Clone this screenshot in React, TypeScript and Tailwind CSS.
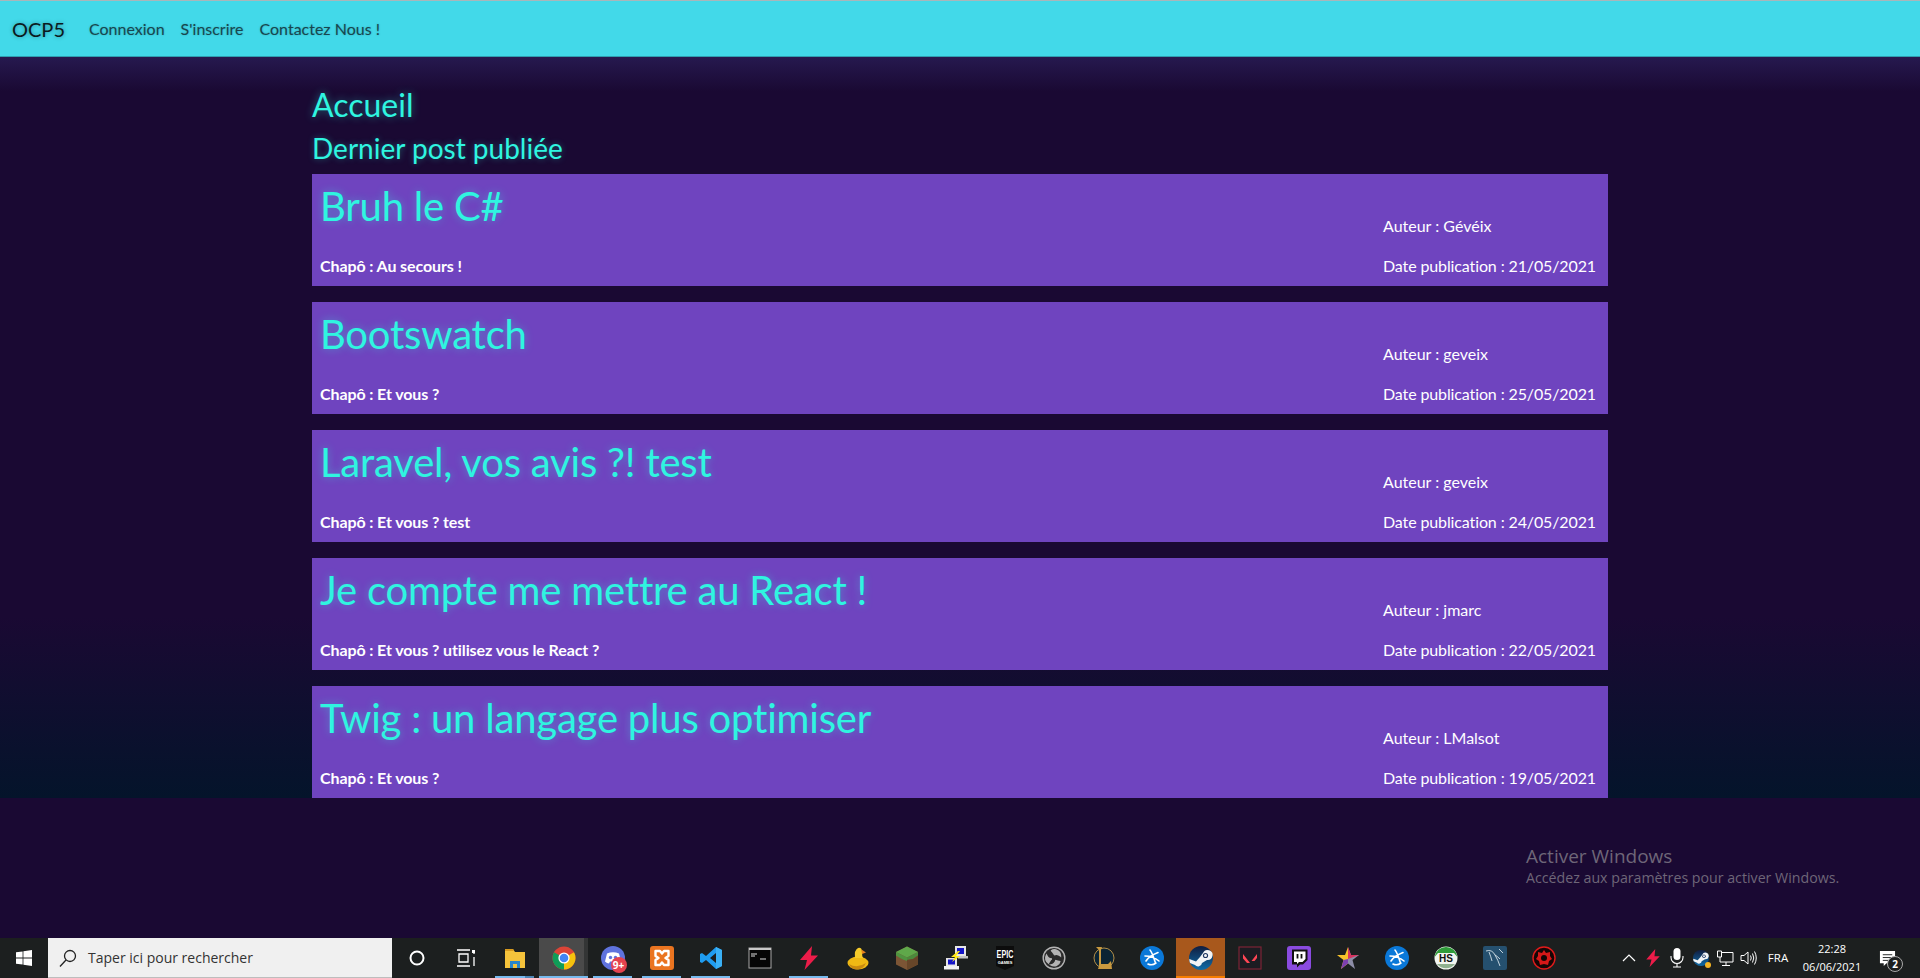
import { type ReactNode } from "react";

const POSTS = [
  { title: "Bruh le C#", chapo: "Au secours !", author: "Gévéix", date: "21/05/2021" },
  { title: "Bootswatch", chapo: "Et vous ?", author: "geveix", date: "25/05/2021" },
  { title: "Laravel, vos avis ?! test", chapo: "Et vous ? test", author: "geveix", date: "24/05/2021" },
  { title: "Je compte me mettre au React !", chapo: "Et vous ? utilisez vous le React ?", author: "jmarc", date: "22/05/2021" },
  { title: "Twig : un langage plus optimiser", chapo: "Et vous ?", author: "LMalsot", date: "19/05/2021" },
];

type SlotProps = { children: ReactNode; open?: boolean; active?: boolean; steam?: boolean; stacked?: boolean };

function Slot({ children, open, active, steam, stacked }: SlotProps) {
  return (
    <div className={`relative flex h-10 w-[49px] items-center justify-center ${active ? "bg-[#4a4a4a]" : ""} ${steam ? "bg-[#a8581c]" : ""}`}>
      {children}
      {active && <div className="absolute top-0 right-0 h-full w-1 bg-[#333535]" />}
      {open && <div className={`absolute bottom-0 h-0.5 bg-[#76b9ed] ${active ? "inset-x-0" : "inset-x-[5px]"}`} />}
      {stacked && <div className="absolute right-[5px] bottom-0 h-0.5 w-[9px] bg-[#4d86b5]" />}
      {steam && <div className="absolute inset-x-0 bottom-0 h-0.5 bg-[#f57c00]" />}
    </div>
  );
}

function Svg({ children, size = 24 }: { children: ReactNode; size?: number }) {
  return (
    <svg width={size} height={size} viewBox="0 0 24 24">
      {children}
    </svg>
  );
}

const Bolt = ({ size = 24 }: { size?: number }) => (
  <Svg size={size}>
    <path d="M15 0 L3 14 L10 14 L7.5 24 L21 9.5 L14 9.5 Z" fill="#ec1c49" />
  </Svg>
);

const BattleNet = () => (
  <Svg>
    <circle cx="12" cy="12" r="12" fill="#0a78d8" />
    <path d="M10 4 Q12 6 15.5 17 M6 15 Q9 10 18 6.5 M5 10 Q13 10 19 15 M8 18 Q12 20 16 17" stroke="#fff" strokeWidth="1.6" fill="none" strokeLinecap="round" />
  </Svg>
);

const SteamMark = ({ size = 24 }: { size?: number }) => (
  <Svg size={size}>
    <defs>
      <linearGradient id="steamFill" x1="0" y1="0" x2="0" y2="1">
        <stop offset="0" stopColor="#111d3f" />
        <stop offset="1" stopColor="#0f6ca8" />
      </linearGradient>
    </defs>
    <circle cx="12" cy="12" r="12" fill="url(#steamFill)" />
    <path d="M0.3 13 L7 15.5 L11 11 L14 7 A5 5 0 1 1 18 14 L13 17 A4 4 0 0 1 6 19 L1 17 Q0.3 15 0.3 13 Z" fill="#f2f4f6" />
    <circle cx="16.5" cy="9.5" r="2.6" fill="#1c3560" />
    <circle cx="16.5" cy="9.5" r="1.5" fill="#f2f4f6" />
  </Svg>
);

const TASK_ICONS: (Omit<SlotProps, "children"> & { icon: ReactNode })[] = [
  {
    icon: (
      <Svg>
        <circle cx="12" cy="12" r="6.5" stroke="#fff" strokeWidth="2" fill="none" />
      </Svg>
    ),
  },
  {
    icon: (
      <Svg>
        <path d="M3 4 H16 M3 20 H16 M5 8 H14 V16 H5 Z M20 6 V8 M20 11 V20" stroke="#fff" strokeWidth="1.3" fill="none" />
        <rect x="18" y="4" width="3" height="3" fill="#fff" />
      </Svg>
    ),
  },
  {
    open: true,
    stacked: true,
    icon: (
      <Svg>
        <path d="M2 3 H10 L12 6 H22 V22 H2 Z" fill="#f5c33b" />
        <path d="M2 3 H10 L11 5 H2 Z" fill="#d89a1e" />
        <path d="M7 22 V15 H17 V22 H14 V18 H10 V22 Z" fill="#2a86c9" />
      </Svg>
    ),
  },
  {
    open: true,
    active: true,
    icon: (
      <Svg>
        <circle cx="12" cy="12" r="11.5" fill="#db4437" />
        <path d="M12 12 L2 6.3 A11.5 11.5 0 0 0 12 23.5 Z" fill="#0f9d58" />
        <path d="M12 12 L22 6.3 A11.5 11.5 0 0 1 12 23.5 Z" fill="#f4c20d" />
        <circle cx="12" cy="12" r="5.6" fill="#fff" />
        <circle cx="12" cy="12" r="4.3" fill="#4285f4" />
      </Svg>
    ),
  },
  {
    open: true,
    icon: (
      <div className="relative">
        <Svg>
          <circle cx="12" cy="12" r="12" fill="#5f73de" />
          <path d="M6 7.5 Q12 5 18 7.5 L20 15.5 Q18 17.5 16 17.5 L15 15.5 H9 L8 17.5 Q6 17.5 4 15.5 Z" fill="#fff" />
          <circle cx="9.5" cy="11.5" r="1.7" fill="#5f73de" />
          <circle cx="14.5" cy="11.5" r="1.7" fill="#5f73de" />
        </Svg>
        <div className="absolute -right-0.5 -bottom-[3px] flex h-4 w-4 items-center justify-center rounded-full bg-[#e5434f] font-['Open_Sans',sans-serif] text-[10px] leading-none font-bold text-white">9+</div>
      </div>
    ),
  },
  {
    open: true,
    icon: (
      <Svg>
        <rect x="0" y="0" width="24" height="24" rx="3" fill="#ea7420" />
        <path d="M5.5 5 H10 L12 7.5 L14 5 H18.5 V10 L15.5 12 L18.5 14 V19 H14 L12 16.5 L10 19 H5.5 V14 L8.5 12 L5.5 10 Z" stroke="#fff" strokeWidth="2.4" fill="none" strokeLinejoin="round" />
      </Svg>
    ),
  },
  {
    open: true,
    icon: (
      <Svg>
        <path d="M17 1 L23 4 V20 L17 23 L7 14 L3 17 L1 16 V8 L3 7 L7 10 Z M17 7 L11 12 L17 17 Z" fill="#1f9cf0" fillRule="evenodd" />
        <path d="M17 1 L23 4 V20 L17 23 V17 V7 Z" fill="#3ab0f5" />
      </Svg>
    ),
  },
  {
    icon: (
      <Svg>
        <rect x="1" y="2" width="22" height="20" fill="#050505" stroke="#a8a8a8" strokeWidth="1" />
        <rect x="1" y="2" width="22" height="2" fill="#c8c8c8" />
        <path d="M3 8 H9 M3 10 H7 M12 13 H18" stroke="#ddd" strokeWidth="1.2" />
      </Svg>
    ),
  },
  { open: true, icon: <Bolt /> },
  {
    icon: (
      <Svg>
        <ellipse cx="12" cy="17" rx="10.5" ry="6.5" fill="#efb914" />
        <path d="M9 12 Q8 4 12 2 Q16 1 16 6 Q16 10 17 12 Z" fill="#f6cb2a" />
        <path d="M15.5 3.5 L20 6.5 L16 8 Z" fill="#e8821e" />
        <path d="M3 18 Q11 23 20 17 Q17 24 10 23.5 Q5 23 3 18 Z" fill="#c98a10" />
      </Svg>
    ),
  },
  {
    icon: (
      <Svg>
        <path d="M12 0.5 L23 6 V18.5 L12 24 L1 18.5 V6 Z" fill="#7c5535" />
        <path d="M12 0.5 L23 6 L12 11.5 L1 6 Z" fill="#5fa84a" />
        <path d="M1 6 L12 11.5 V15 L8 13.5 L5 12 L1 9.5 Z" fill="#4f9440" />
        <path d="M12 11.5 L23 6 V9.5 L18 13 L12 14 Z" fill="#4b8a3c" />
        <path d="M12 14 L18 13 L23 9.5 V18.5 L12 24 Z" fill="#674629" />
      </Svg>
    ),
  },
  {
    icon: (
      <Svg>
        <rect x="11" y="0" width="11" height="10" fill="#e6e6e6" />
        <rect x="13" y="2" width="7" height="6" fill="#1414c8" />
        <rect x="14" y="10" width="10" height="2.5" fill="#c4c4c4" />
        <rect x="2" y="12" width="11" height="8" fill="#e6e6e6" />
        <rect x="4" y="13.5" width="7" height="5" fill="#1414c8" />
        <rect x="0" y="20" width="15" height="3.5" fill="#f2f2f2" />
        <path d="M14 5 L7 11 H11 L8 16 L16 10 H12 L16 5 Z" fill="#ffe81a" />
      </Svg>
    ),
  },
  {
    icon: (
      <Svg>
        <path d="M3 0 H21 V20 L12 24 L3 20 Z" fill="#0c0c0c" />
        <text transform="translate(12 12) scale(0.72 1)" textAnchor="middle" fill="#fff" fontSize="10" fontWeight="700" fontFamily="'Liberation Sans',sans-serif">
          EPIC
        </text>
        <text x="12" y="18" textAnchor="middle" fill="#fff" fontSize="4" fontWeight="700" fontFamily="'Liberation Sans',sans-serif">
          GAMES
        </text>
      </Svg>
    ),
  },
  {
    icon: (
      <Svg>
        <circle cx="12" cy="12" r="10.8" fill="#2a2a2a" stroke="#b4b4b4" strokeWidth="1.4" />
        <path d="M9 5 A6 6 0 0 1 18.5 10 Q15 7 12 9 M7 17.5 A6 6 0 0 1 4.5 9 Q6 13 10 13 M18 15 A6 6 0 0 1 9 19 Q13 18.5 14 14" stroke="#b4b4b4" strokeWidth="1.4" fill="#b4b4b4" />
      </Svg>
    ),
  },
  {
    icon: (
      <Svg>
        <circle cx="13" cy="12" r="10" fill="#0b2433" stroke="#c49a4c" strokeWidth="0.9" />
        <path d="M5 1 H11 L10 4 V18 H17 L20 15 L21 23 H7 L8 20 V4 Z" fill="#c8993f" />
      </Svg>
    ),
  },
  { icon: <BattleNet /> },
  { steam: true, icon: <SteamMark /> },
  {
    icon: (
      <Svg>
        <rect x="1" y="1" width="22" height="22" fill="#1c1c22" stroke="#7c2436" strokeWidth="1.2" />
        <path d="M5 8 L12 17 H9 L5 12.5 Z M19 8 V12 L16.5 15 H13.5 Z" fill="#ff4655" />
      </Svg>
    ),
  },
  {
    icon: (
      <Svg>
        <rect x="0" y="0" width="24" height="24" rx="3" fill="#8a4be0" />
        <path d="M5 3.5 H20.5 V14 L16 18.5 H13 L10 21.5 V18.5 H5 Z" fill="#111" />
        <path d="M7 5.5 H18.5 V13 L15.5 16 H12 L10 18 V16 H7 Z" fill="#fff" />
        <path d="M10.5 8 V12.5 M14.5 8 V12.5" stroke="#111" strokeWidth="1.8" />
      </Svg>
    ),
  },
  {
    icon: (
      <Svg>
        <path d="M12 1 L15 9 H23 L16.5 14 L19 23 L12 17.5 Z" fill="#8d8da6" />
        <path d="M12 1 L15 9 H23 L12 13 Z" fill="#d8335f" />
        <path d="M12 1 L9 9 H1 L7.5 14 L5 23 L12 17.5 Z" fill="#f6c22a" />
        <path d="M12 17.5 L5 23 L7.5 14 L12 13 Z" fill="#7d3fb0" />
      </Svg>
    ),
  },
  { icon: <BattleNet /> },
  {
    icon: (
      <Svg>
        <circle cx="12" cy="12" r="11.5" fill="#f2f5f0" />
        <path d="M0.6 11 A11.5 11.5 0 0 1 23.4 11 L20 7 H4 Z" fill="#2f9c3a" />
        <path d="M3 18 A11.5 11.5 0 0 0 21 18 Z" fill="#8fb08f" />
        <text x="12" y="15.5" textAnchor="middle" fill="#111" fontSize="10" fontWeight="700" fontFamily="'Liberation Sans',sans-serif">
          HS
        </text>
      </Svg>
    ),
  },
  {
    icon: (
      <Svg>
        <rect x="0" y="0" width="24" height="24" rx="2" fill="#25506f" />
        <path d="M3 5 Q9 3 12 9 Q15 14 17 20 M6 6 Q8 11 9 15 M12 9 Q14 10 17 13 M16 3 L20 7" stroke="#d5e2ea" strokeWidth="0.9" fill="none" />
      </Svg>
    ),
  },
  {
    icon: (
      <Svg>
        <circle cx="12" cy="12" r="11" fill="#160606" stroke="#e01b1b" strokeWidth="1.4" />
        <path d="M12 4 L14 7 L18 6 L18 10 L20 13 L17 15 L16 19 L12 18 L8 19 L7 15 L4 13 L6 10 L6 6 L10 7 Z" fill="#d61818" />
        <circle cx="12" cy="12" r="3" fill="#160606" />
      </Svg>
    ),
  },
];

export default function App() {
  return (
    <div className="flex h-[978px] flex-col overflow-hidden bg-[#1a0933] font-['Lato',sans-serif]">
      <nav className="flex h-[57px] shrink-0 items-center border-t border-b border-t-[#a9b6ba] border-b-[#2e9fb0] bg-[#42d9e9] pl-3">
        <span className="mr-6 text-xl text-[#0b1a20] [text-shadow:0_0_4px_rgba(0,0,0,0.35)]">OCP5</span>
        <div className="flex gap-4 text-base text-[#17474f] [text-shadow:0_0_2px_rgba(0,0,0,0.25)]">
          <span>Connexion</span>
          <span>S'inscrire</span>
          <span>Contactez Nous !</span>
        </div>
      </nav>

      <div className="h-[741px] shrink-0 bg-[linear-gradient(180deg,#26194f_0px,#1a0933_34px,#1a0933_560px,#04142b_100%)]">
        <main className="mx-auto w-[1320px] px-3">
          <h1 className="pt-[29px] text-[32px] leading-[38px] text-[#2ff5e0] [text-shadow:0_0_8px_rgba(47,245,224,0.45)]">Accueil</h1>
          <h2 className="mt-1 text-[28px] leading-[40px] text-[#2ff5e0] [text-shadow:0_0_6px_rgba(47,245,224,0.35)]">Dernier post publiée</h2>
          <div className="mt-[6px] flex flex-col gap-4">
            {POSTS.map((post) => (
              <article key={post.title} className="flex h-28 justify-between bg-[#6f44bf] pl-2">
                <div className="flex flex-col justify-between pb-[9px]">
                  <h3 className="pt-2 text-[40px] leading-12 tracking-[-0.2px] text-[#2ff5e0] [text-shadow:0_0_8px_rgba(47,245,224,0.4)]">{post.title}</h3>
                  <p className="text-base leading-[22px] font-bold tracking-[-0.1px] text-white">Chapô : {post.chapo}</p>
                </div>
                <div className="flex w-[225px] flex-col justify-between pt-[41px] pb-[9px] text-base leading-[22px] text-white">
                  <span>Auteur : {post.author}</span>
                  <span className="tracking-[-0.12px]">Date publication : {post.date}</span>
                </div>
              </article>
            ))}
          </div>
        </main>
      </div>

      <div className="relative min-h-0 flex-1">
        <div className="absolute top-[46px] left-[1526px] font-['Open_Sans',sans-serif] text-[#6e6678]">
          <div className="text-[19px] leading-6">Activer Windows</div>
          <div className="text-[14.2px] leading-[19px]">Accédez aux paramètres pour activer Windows.</div>
        </div>
      </div>

      <footer className="flex h-10 shrink-0 items-center bg-[#1c1f1f] font-['Open_Sans',sans-serif] text-white">
        <div className="flex h-10 w-12 items-center justify-center">
          <svg width="16" height="16" viewBox="0 0 16 16" fill="#fff">
            <path d="M0 2.3 L6.6 1.4 V7.5 H0 Z M7.4 1.3 L16 0 V7.5 H7.4 Z M0 8.4 H6.6 V14.6 L0 13.7 Z M7.4 8.4 H16 V16 L7.4 14.7 Z" />
          </svg>
        </div>
        <div className="flex h-10 w-[344px] items-center gap-[11px] border-b border-b-[#bdbdbd] bg-[#f0f0f0] pl-[11px] text-sm text-[#333]">
          <svg width="18" height="20" viewBox="0 0 18 20" fill="none" stroke="#222" strokeWidth="1.3">
            <circle cx="11" cy="8" r="5.5" />
            <path d="M7 12 L1 18.5" />
          </svg>
          <span>Taper ici pour rechercher</span>
        </div>
        <div className="flex">
          {TASK_ICONS.map((item, i) => (
            <Slot key={i} open={item.open} active={item.active} steam={item.steam} stacked={item.stacked}>
              {item.icon}
            </Slot>
          ))}
        </div>
        <div className="ml-[49px] flex">
          <div className="flex w-6 items-center justify-center">
            <svg width="14" height="14" viewBox="0 0 14 14" fill="none" stroke="#fff" strokeWidth="1.2">
              <path d="M1 10 L7 4 L13 10" />
            </svg>
          </div>
          <div className="flex w-6 items-center justify-center">
            <Bolt size={18} />
          </div>
          <div className="flex w-6 items-center justify-center">
            <svg width="14" height="20" viewBox="0 0 14 20" fill="#fff">
              <rect x="3.5" y="0" width="7" height="12" rx="3.5" />
              <path d="M1 8 V9.5 A6 6 0 0 0 13 9.5 V8 M7 15.5 V18.5 M3 19 H11" fill="none" stroke="#fff" strokeWidth="1.1" />
            </svg>
          </div>
          <div className="flex w-6 items-center justify-center">
            <div className="relative h-4 w-4">
              <SteamMark size={16} />
              <div className="absolute -right-0.5 -bottom-0.5 h-1.5 w-1.5 rounded-full bg-[#f5b423]" />
            </div>
          </div>
          <div className="flex w-6 items-center justify-center">
            <svg width="18" height="18" viewBox="0 0 18 18" fill="none" stroke="#fff" strokeWidth="1">
              <path d="M1.5 2 H5.5 V8 H1.5 Z M5.5 3.5 H17 V13 H4 V8 M10 13 V16 M6 16.5 H14" />
            </svg>
          </div>
          <div className="flex w-6 items-center justify-center">
            <svg width="18" height="18" viewBox="0 0 18 18" fill="none" stroke="#fff" strokeWidth="1">
              <path d="M1 6.5 H4 L8 3 V15 L4 11.5 H1 Z M10.5 6.5 Q12 9 10.5 11.5 M12.5 4.5 Q15 9 12.5 13.5 M14.5 2.5 Q18 9 14.5 15.5" />
            </svg>
          </div>
        </div>
        <span className="w-[34px] text-center text-[11.5px]">FRA</span>
        <div className="ml-1 w-[66px] text-center text-[11px] leading-[18px]">
          <div>22:28</div>
          <div>06/06/2021</div>
        </div>
        <div className="relative ml-[14px]">
          <svg width="17" height="17" viewBox="0 0 18 18" fill="#fff">
            <path d="M1 1 H17 V14 H8 L5 17 V14 H1 Z" />
            <path d="M4 5 H14 M4 8 H14 M4 11 H10" stroke="#1c1f1f" strokeWidth="1" />
          </svg>
          <div className="absolute -right-[7px] -bottom-[5px] flex h-4 w-4 items-center justify-center rounded-full border border-[#aaa] bg-[#1c1f1f] text-[10px] leading-none font-bold">2</div>
        </div>
      </footer>
    </div>
  );
}
